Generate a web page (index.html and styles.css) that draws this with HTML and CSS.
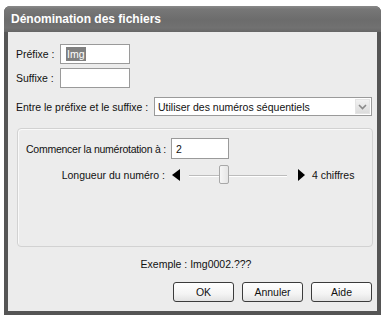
FILE: index.html
```html
<!DOCTYPE html>
<html lang="fr">
<head>
<meta charset="utf-8">
<title>Dénomination des fichiers</title>
<link rel="stylesheet" href="styles.css">
</head>
<body>
<div class="window">
  <div class="titlebar">Dénomination des fichiers</div>
  <div class="content">
    <div class="row r-prefix">
      <span class="label">Préfixe :</span>
      <div class="input short"><span class="sel">Img</span></div>
    </div>
    <div class="row r-suffix">
      <span class="label">Suffixe :</span>
      <div class="input short"></div>
    </div>
    <div class="row r-between">
      <span class="label">Entre le préfixe et le suffixe :</span>
      <div class="select">
        <span class="select-text">Utiliser des numéros séquentiels</span>
        <span class="drop">
          <svg width="9" height="6" viewBox="0 0 9 6"><path d="M1 1 L4.5 4.5 L8 1" fill="none" stroke="#8a8a8a" stroke-width="1.6"/></svg>
        </span>
      </div>
    </div>
    <div class="group">
      <div class="row r-start">
        <span class="label">Commencer la numérotation à :</span>
        <div class="input num">2</div>
      </div>
      <div class="row r-length">
        <span class="label len-label">Longueur du numéro :</span>
        <span class="arrow left"></span>
        <div class="slider">
          <div class="track"></div>
          <div class="thumb"></div>
        </div>
        <span class="arrow right"></span>
        <span class="label digits">4 chiffres</span>
      </div>
    </div>
    <div class="example">Exemple : Img0002.???</div>
    <div class="buttons">
      <button class="btn">OK</button>
      <button class="btn">Annuler</button>
      <button class="btn">Aide</button>
    </div>
  </div>
</div>
</body>
</html>
```
FILE: styles.css
```css
html, body {
  margin: 0;
  padding: 0;
  background: #ffffff;
}
body {
  font-family: "Liberation Sans", Arial, sans-serif;
  font-size: 10.5px;
  color: #111;
}
.window {
  margin: 6px 0 0 4px;
  width: 377px;
  height: 309px;
  box-sizing: border-box;
  display: flex;
  flex-direction: column;
  background: #555;
  border-radius: 6px 6px 0 0;
  padding: 0 4px 4px 4px;
}
.titlebar {
  height: 26px;
  margin: 0 -4px;
  border-radius: 6px 6px 0 0;
  background: linear-gradient(#8a8a8a 0px, #777 3px, #6c6c6c 14px, #717171 22px, #666 26px);
  color: #fff;
  font-family: "Liberation Sans", Arial, sans-serif;
  font-weight: bold;
  font-size: 12px;
  line-height: 26px;
  padding-left: 7px;
}
.content {
  flex: 1;
  background: #ececec;
  display: flex;
  flex-direction: column;
  padding: 12px 5px 0 8px;
}
.row {
  display: flex;
  align-items: center;
}
.label {
  white-space: nowrap;
}
.r-prefix .label, .r-suffix .label {
  width: 44px;
}
.r-suffix { margin-top: 4px; }
.input {
  height: 20px;
  box-sizing: border-box;
  border: 1px solid #9a9a9a;
  background: #fff;
  display: flex;
  align-items: center;
  padding-left: 5px;
}
.input.short { width: 70px; }
.sel {
  background: #808080;
  color: #fff;
  padding: 1px 1px;
  line-height: 12px;
}
.r-between { margin-top: 9px; }
.r-between .label { width: 138px; }
.select {
  width: 218px;
  height: 19px;
  box-sizing: border-box;
  border: 1px solid #9a9a9a;
  background: #fff;
  display: flex;
  align-items: center;
  padding-left: 3px;
}
.select-text { flex: 1; }
.drop {
  width: 15px;
  height: 15px;
  margin-right: 1px;
  background: linear-gradient(#f2f2f2, #dcdcdc);
  border: 1px solid #e4e4e4;
  box-sizing: border-box;
  display: flex;
  align-items: center;
  justify-content: center;
}
.group {
  margin-top: 12px;
  margin-left: 1px;
  width: 356px;
  height: 119px;
  box-sizing: border-box;
  border: 1px solid #d2d2d2;
  border-radius: 4px;
  box-shadow: inset 1px 1px 0 #fafafa;
  padding: 9px 0 0 8px;
}
.r-start .label { width: 145px; letter-spacing: -0.25px; }
.input.num { width: 58px; height: 21px; padding-left: 4px; }
.r-length { margin-top: 6px; height: 20px; }
.len-label {
  width: 139px;
  text-align: right;
  margin-right: 7px;
}
.arrow {
  width: 0;
  height: 0;
  border-top: 6px solid transparent;
  border-bottom: 6px solid transparent;
}
.arrow.left { border-right: 8px solid #000; }
.arrow.right { border-left: 7px solid #000; }
.slider {
  position: relative;
  width: 106px;
  height: 20px;
  margin: 0 3px 0 9px;
}
.track {
  position: absolute;
  left: 0;
  right: 8px;
  top: 10px;
  height: 0;
  border-top: 1px solid #bcbcbc;
  border-bottom: 1px solid #fff;
}
.thumb {
  position: absolute;
  left: 30px;
  top: 0;
  width: 10px;
  height: 19px;
  box-sizing: border-box;
  border: 1px solid #a8a8a8;
  border-radius: 2px;
  background: linear-gradient(90deg, #f6f6f6, #e6e6e6);
}
.digits { margin-left: 7px; }
.example {
  margin-top: 11px;
  text-align: center;
  padding-left: 4px;
}
.buttons {
  display: flex;
  gap: 8px;
  margin-top: 12px;
  margin-left: 157px;
}
.btn {
  width: 61px;
  height: 20px;
  box-sizing: border-box;
  border: 1px solid #3c3c3c;
  border-radius: 3px;
  background: linear-gradient(#ffffff, #f4f4f4 60%, #e2e2e2);
  font-family: "Liberation Sans", Arial, sans-serif;
  font-size: 10.5px;
  color: #111;
  padding: 0;
}
```
